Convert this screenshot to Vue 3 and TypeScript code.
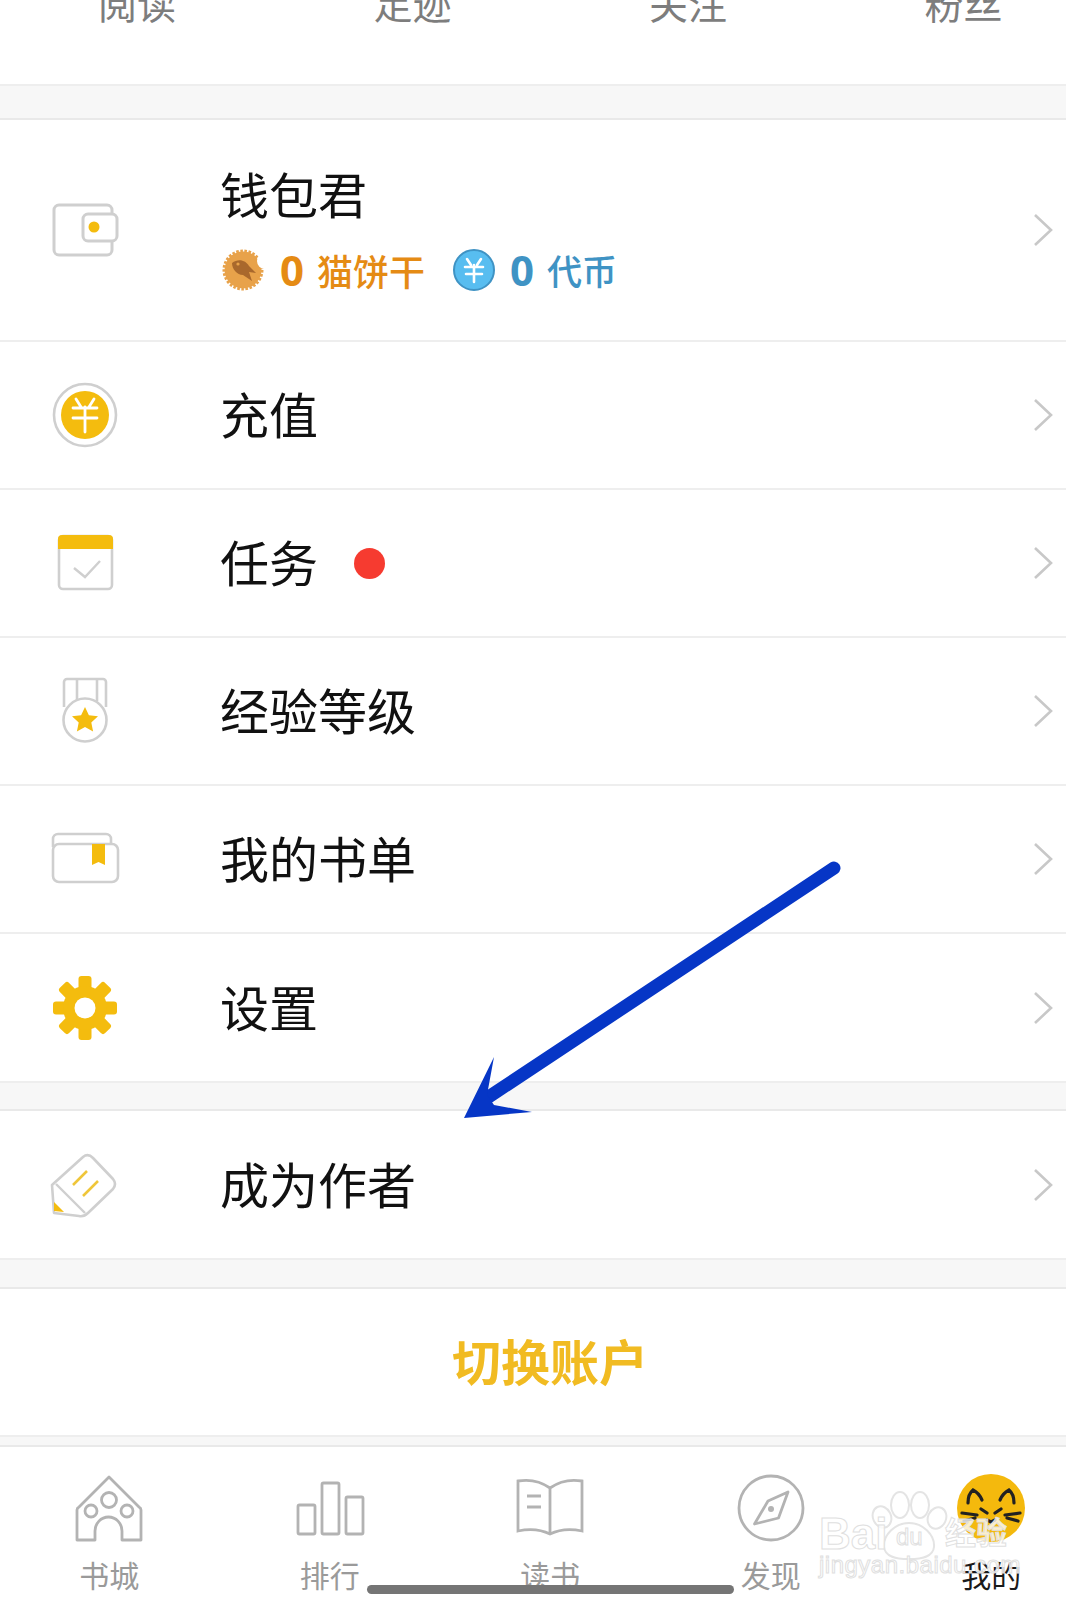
<script setup lang="ts">
interface MenuRow { key: string; label: string; dot?: boolean }
const stats: string[] = ['阅读', '足迹', '关注', '粉丝']
const groupOne: MenuRow[] = [
  { key: 'coin', label: '充值' },
  { key: 'task', label: '任务', dot: true },
  { key: 'medal', label: '经验等级' },
  { key: 'list', label: '我的书单' },
  { key: 'gear', label: '设置' },
]
const teeth: number[] = [0, 45, 90, 135, 180, 225, 270, 315]
const tabs: { key: string; label: string }[] = [
  { key: 'home', label: '书城' },
  { key: 'rank', label: '排行' },
  { key: 'read', label: '读书' },
  { key: 'find', label: '发现' },
  { key: 'mine', label: '我的' },
]
</script>

<template>
  <div class="page">
    <section class="stats">
      <span v-for="s in stats" :key="s" class="stat">{{ s }}</span>
    </section>
    <div class="band band-top"></div>

    <section class="row row-wallet">
      <svg class="icon" viewBox="0 0 80 80" fill="none">
        <rect x="9" y="15" width="58" height="50" rx="5" stroke="#cfcfcf" stroke-width="3" />
        <rect x="38" y="24" width="34" height="27" rx="5" fill="#fff" stroke="#cfcfcf" stroke-width="3" />
        <circle cx="49" cy="37" r="5.5" fill="#f4bc0e" />
      </svg>
      <div class="wallet-text">
        <div class="label">钱包君</div>
        <div class="balance">
          <svg class="mini" viewBox="0 0 44 44">
            <circle cx="21" cy="22" r="18.500" fill="#e8a24a" stroke="#e8a24a" stroke-width="4" stroke-dasharray="2.500 1.500" />
            <circle cx="43" cy="13" r="8" fill="#fff" />
            <path d="M10 15c6-5 14-3 17 3l7 7-7-1 3 9-9-6c-6 0-11-6-11-12z" fill="#a9682c" />
            <circle cx="16" cy="16" r="1.6" fill="#e8a24a" />
          </svg>
          <span class="num orange">0</span>
          <span class="unit orange">猫饼干</span>
          <svg class="mini mini-blue" viewBox="0 0 44 44" fill="none">
            <circle cx="22" cy="22" r="20" fill="#58bdf0" stroke="#3f93c4" stroke-width="2" />
            <path d="M15 11l4 6M29 11l-4 6M13 19h18M14 26h16M22 17v17" stroke="#fff" stroke-width="2.6" stroke-linecap="round" />
          </svg>
          <span class="num blue">0</span>
          <span class="unit blue small">代币</span>
        </div>
      </div>
      <svg class="chevron" viewBox="0 0 20 34" fill="none"><path d="M2 2l16 15L2 32" stroke="#c8c8c8" stroke-width="2.6" /></svg>
    </section>

    <section v-for="r in groupOne" :key="r.key" class="row">
      <svg v-if="r.key === 'coin'" class="icon" viewBox="0 0 80 80" fill="none">
        <circle cx="40" cy="40" r="31" stroke="#cfcfcf" stroke-width="2.6" />
        <circle cx="40" cy="40" r="24" fill="#f4bc0e" />
        <path d="M31 24l5 8M49 24l-5 8M28 33h24M28 43h24M40 32v25" stroke="#fff" stroke-width="2.8" stroke-linecap="round" />
      </svg>
      <svg v-else-if="r.key === 'task'" class="icon" viewBox="0 0 80 80" fill="none">
        <rect x="14" y="13" width="53" height="53" rx="4" stroke="#cfcfcf" stroke-width="2.6" />
        <path d="M13 26V16a4 4 0 0 1 4-4h47a4 4 0 0 1 4 4v10z" fill="#f4bc0e" />
        <path d="M29 45l11 9 15-16" stroke="#cfcfcf" stroke-width="2.4" />
      </svg>
      <svg v-else-if="r.key === 'medal'" class="icon" viewBox="0 0 80 80" fill="none">
        <path d="M19 36V11a3 3 0 0 1 3-3h36a3 3 0 0 1 3 3v25M32 8v22M52 8v22" stroke="#cfcfcf" stroke-width="2.6" />
        <circle cx="40" cy="49" r="21.5" fill="#fff" stroke="#cfcfcf" stroke-width="2.6" />
        <path d="M40 36l3.9 8.2 9.1 1.1-6.7 6.2 1.8 9-8.1-4.5-8.1 4.500 1.8-9-6.7-6.2 9.1-1.1z" fill="#f4bc0e" />
      </svg>
      <svg v-else-if="r.key === 'list'" class="icon" viewBox="0 0 80 80" fill="none">
        <path d="M8 28v-8a5 5 0 0 1 5-5h48a5 5 0 0 1 5 5v5" stroke="#cfcfcf" stroke-width="2.6" />
        <rect x="8" y="25" width="65" height="38" rx="6" fill="#fff" stroke="#cfcfcf" stroke-width="2.6" />
        <path d="M47 25h13v21l-6.500-3-6.500 3z" fill="#f4bc0e" />
      </svg>
      <svg v-else class="icon" viewBox="0 0 80 80">
        <g fill="#f4bc0e">
          <rect v-for="a in teeth" :key="a" x="33.500" y="8" width="13" height="16" rx="3" :transform="`rotate(${a} 40 40)`" />
          <circle cx="40" cy="40" r="22" />
        </g>
        <circle cx="40" cy="40" r="10.500" fill="#fff" />
      </svg>
      <span class="label">{{ r.label }}</span>
      <i v-if="r.dot" class="dot"></i>
      <svg class="chevron" viewBox="0 0 20 34" fill="none"><path d="M2 2l16 15L2 32" stroke="#c8c8c8" stroke-width="2.6" /></svg>
    </section>

    <div class="band band-mid"></div>

    <section class="row">
      <svg class="icon" viewBox="0 0 80 80" fill="none">
        <path d="M7 40L38 12q5-4 10 1l20 21q4 5 0 10L43 68q-4 4-9 3L9 68z" fill="#fff" stroke="#cfcfcf" stroke-width="2.6" stroke-linejoin="round" />
        <path d="M11 39l29 29" stroke="#cfcfcf" stroke-width="2.4" />
        <path d="M9 57l10 10-10-1z" fill="#f4bc0e" />
        <path d="M28 40l14-14M38 51l15-15" stroke="#efc63a" stroke-width="2.6" />
      </svg>
      <span class="label">成为作者</span>
      <svg class="chevron" viewBox="0 0 20 34" fill="none"><path d="M2 2l16 15L2 32" stroke="#c8c8c8" stroke-width="2.6" /></svg>
    </section>

    <div class="band band-low"></div>
    <section class="row row-switch"><span class="switch">切换账户</span></section>
    <div class="band band-thin"></div>

    <nav class="tabs">
      <div v-for="t in tabs" :key="t.key" class="tab" :class="{ active: t.key === 'mine' }">
        <svg class="tab-icon" viewBox="0 0 80 80" fill="none" stroke="#b3b3b3" stroke-width="2.800">
          <template v-if="t.key === 'home'">
            <path d="M26 69H8V39q0-2 2-3L40 6l30 30q2 1 2 3v30H53V60a13.500 14 0 0 0-27 0z" stroke-linejoin="round" />
            <circle cx="40" cy="29" r="7.500" /><circle cx="22" cy="40" r="6" /><circle cx="58" cy="40" r="6" />
          </template>
          <template v-else-if="t.key === 'rank'">
            <rect x="8" y="34" width="17" height="29" rx="1.500" />
            <rect x="32" y="12" width="17" height="51" rx="1.500" />
            <rect x="56" y="26" width="17" height="37" rx="1.500" />
          </template>
          <template v-else-if="t.key === 'read'">
            <path d="M40 17Q26 7 8 10V60Q26 56 40 63Q54 56 72 60V10Q54 7 40 17ZM40 17V63M17 25H31M17 36H31" />
          </template>
          <template v-else-if="t.key === 'find'">
            <circle cx="40" cy="37" r="32" />
            <path d="M57 21L47.500 47 23.500 53 37 30z" stroke-linejoin="round" />
            <circle cx="40" cy="38" r="3" fill="#b3b3b3" stroke="none" />
          </template>
          <template v-else>
            <circle cx="40" cy="37" r="34" fill="#f4b90d" stroke="none" />
            <g stroke="#222" stroke-width="3.200" stroke-linecap="round">
              <path d="M17 32q0-9 5-13 6 3 9 10M63 32q0-9-5-13-6 3-9 10" />
              <path d="M11 42l15 2M13 50l11-3M69 42l-15 2M67 50l-11-3M30 38l6 4M50 38l-6 4" />
              <path d="M36 49l4 2 4-2" />
            </g>
          </template>
        </svg>
        <span class="tab-label">{{ t.label }}</span>
      </div>
    </nav>

    <svg class="arrow" viewBox="0 0 1066 1600" fill="none">
      <path d="M834 868L484 1100" stroke="#0636c6" stroke-width="13" stroke-linecap="round" />
      <path d="M464 1118L494 1057 487 1095 494 1105 532 1112z" fill="#0636c6" />
    </svg>

    <div class="watermark">
      <svg class="paw" viewBox="0 0 140 80" fill="#fff" stroke="#e4e4e4" stroke-width="2">
        <ellipse cx="37" cy="32" rx="9" ry="11" transform="rotate(-25 37 32)" />
        <ellipse cx="55" cy="20" rx="9" ry="13" />
        <ellipse cx="75" cy="20" rx="9" ry="13" />
        <ellipse cx="92" cy="33" rx="9" ry="11" transform="rotate(25 92 33)" />
        <path d="M64 38c14 0 26 12 25 24-1 10-12 12-25 12s-24-2-25-12c-1-12 11-24 25-24z" />
      </svg>
      <span class="wm wm-bai">Bai</span>
      <span class="wm wm-du">du</span>
      <span class="wm wm-jy">经验</span>
      <span class="wm wm-url">jingyan.baidu.com</span>
    </div>

    <div class="home-bar"></div>
  </div>
</template>

<style scoped>
.page {
  position: relative;
  width: 1066px;
  height: 1600px;
  overflow: hidden;
  background: #fff;
  font-family: "Noto Sans CJK SC", "Noto Sans", sans-serif;
  color: #111;
}
.stats {
  height: 84px;
  box-sizing: border-box;
  overflow: hidden;
  display: flex;
  align-items: flex-end;
  gap: 197.500px;
  padding: 0 0 62px 98px;
}
.stat {
  width: 78px;
  flex: none;
  font-size: 39px;
  line-height: 40px;
  color: #7d7d7d;
  white-space: nowrap;
}
.band {
  box-sizing: border-box;
  background: #f7f7f7;
  border-top: 2px solid #eeeeee;
  border-bottom: 2px solid #e9e9e9;
}
.band-top { height: 36px; }
.band-mid { height: 30px; }
.band-low { height: 31px; }
.band-thin { height: 12px; }
.row {
  display: flex;
  align-items: center;
  height: 148px;
  box-sizing: border-box;
  padding-left: 45px;
  border-bottom: 2px solid #eeeeee;
  background: #fff;
}
.row:has(+ .band) {
  height: 147px;
  border-bottom: none;
}
.row.row-wallet { height: 222px; }
.icon {
  width: 80px;
  height: 80px;
  flex: none;
  margin-right: 95px;
}
.label {
  font-size: 49px;
  line-height: 60px;
  padding-bottom: 4px;
  color: #111;
  white-space: nowrap;
}
.wallet-text {
  display: flex;
  flex-direction: column;
  gap: 20px;
  margin-top: -4px;
}
.balance {
  display: flex;
  align-items: center;
  height: 46px;
}
.mini {
  width: 44px;
  height: 44px;
  flex: none;
  margin-left: 2px;
}
.mini-blue { margin-left: 27px; }
.num {
  font-family: "Noto Sans", sans-serif;
  font-weight: 700;
  font-size: 42px;
  line-height: 46px;
  margin-left: 14px;
}
.unit {
  font-size: 36px;
  font-weight: 500;
  line-height: 46px;
  margin-left: 13px;
  white-space: nowrap;
}
.unit.small { font-size: 35px; }
.orange { color: #e58b14; }
.blue { color: #3f93c4; }
.dot {
  width: 31px;
  height: 31px;
  border-radius: 50%;
  background: #f63b30;
  margin-left: 36px;
}
.chevron {
  width: 20px;
  height: 34px;
  margin-left: auto;
  margin-right: 13px;
  flex: none;
}
.row.row-switch {
  height: 146px;
  justify-content: center;
  padding-left: 34px;
  border-bottom: none;
}
.switch {
  font-size: 49px;
  font-weight: 700;
  line-height: 60px;
  padding-bottom: 4px;
  color: #f1bb22;
}
.tabs {
  display: flex;
  height: 154px;
  margin-left: -1px;
  padding-top: 24px;
  box-sizing: border-box;
}
.tab {
  width: 220.500px;
  flex: none;
  display: flex;
  flex-direction: column;
  align-items: center;
}
.tab-icon {
  width: 80px;
  height: 80px;
  flex: none;
}
.tab-label {
  font-size: 30px;
  line-height: 36px;
  margin-top: 5px;
  color: #9a9a9a;
}
.tab.active .tab-label { color: #1a1a1a; }
.arrow {
  position: absolute;
  left: 0;
  top: 0;
  width: 1066px;
  height: 1600px;
  pointer-events: none;
}
.watermark {
  position: absolute;
  left: 819px;
  top: 1485px;
  width: 200px;
  height: 100px;
}
.paw {
  position: absolute;
  left: 26px;
  top: 0;
  width: 140px;
  height: 80px;
}
.wm {
  position: absolute;
  color: rgba(255, 255, 255, 0.8);
  -webkit-text-stroke: 1px #e0e0e0;
  white-space: nowrap;
}
.wm-bai {
  left: 0;
  top: 24px;
  font: 700 44px/50px "Liberation Sans", sans-serif;
}
.wm-du {
  left: 77px;
  top: 38px;
  font: 400 24px/28px "Liberation Sans", sans-serif;
}
.wm-jy {
  left: 126px;
  top: 26px;
  font: 700 31px/40px "Noto Sans CJK SC", sans-serif;
}
.wm-url {
  left: 0;
  top: 66px;
  font: 400 24px/28px "Liberation Sans", sans-serif;
  letter-spacing: 0.500px;
}
.home-bar {
  position: absolute;
  left: 367px;
  top: 1585px;
  width: 367px;
  height: 9px;
  border-radius: 5px;
  background: #757575;
}
</style>
